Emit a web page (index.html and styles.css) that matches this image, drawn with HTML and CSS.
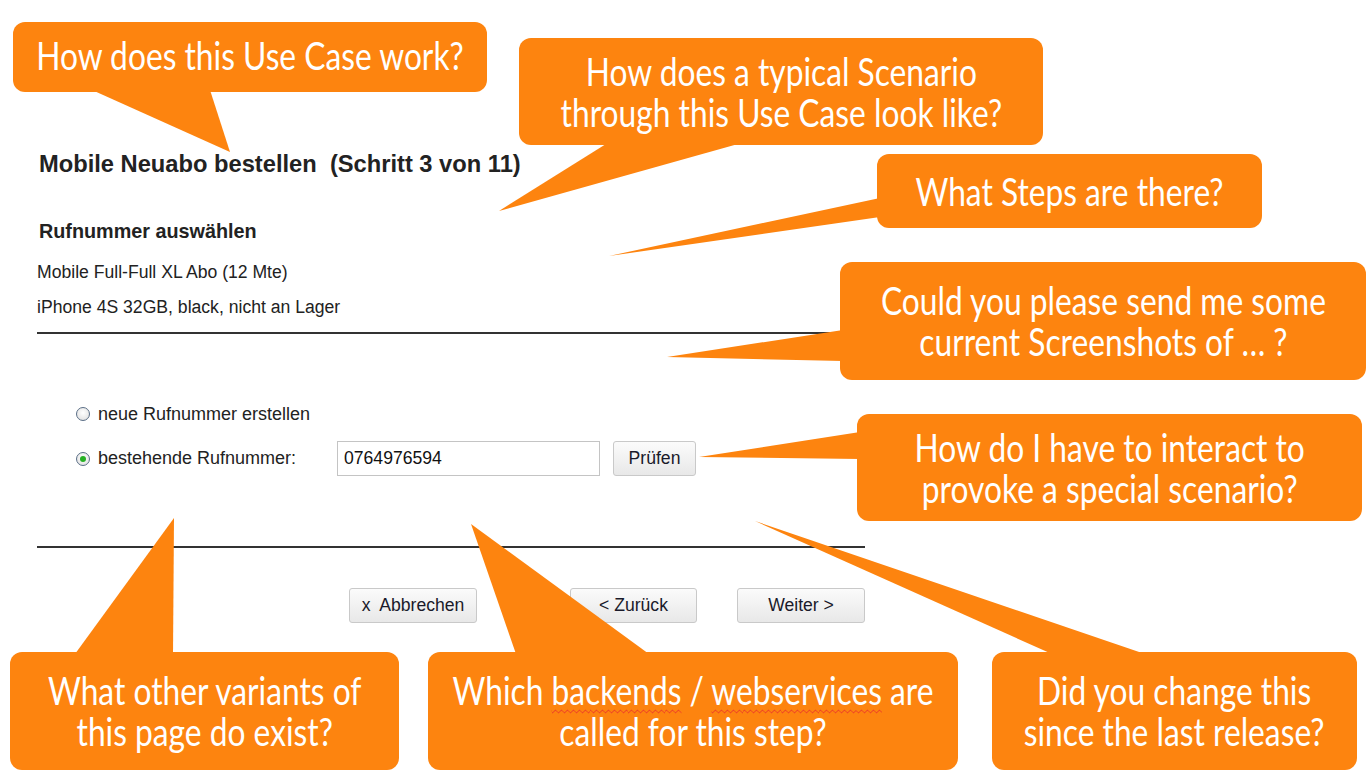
FILE: index.html
```html
<!DOCTYPE html>
<html lang="de">
<head>
  <meta charset="UTF-8">
  <meta name="viewport" content="width=device-width, initial-scale=1.0">
  <link rel="stylesheet" href="styles.css">
</head>
<body>
  <div class="slide">
    <div class="wizard">
      <h1 class="wizard-title">Mobile Neuabo bestellen&nbsp; (Schritt 3 von 11)</h1>
      <h2 class="step-title">Rufnummer auswählen</h2>
      <p class="info">Mobile Full-Full XL Abo (12 Mte)</p>
      <p class="info info-second">iPhone 4S 32GB, black, nicht an Lager</p>
      <div class="rule"></div>

      <div class="options">
        <label class="option">
          <input type="radio" name="nummer">
          <span>neue Rufnummer erstellen</span>
        </label>
        <div class="option option-input">
          <label class="option-label">
            <input type="radio" name="nummer" checked>
            <span>bestehende Rufnummer:</span>
          </label>
          <input type="text" class="number-field" value="0764976594">
          <button class="btn btn-check">Prüfen</button>
        </div>
      </div>

      <div class="rule rule-bottom"></div>

      <div class="nav-buttons">
        <button class="btn btn-cancel">x&nbsp; Abbrechen</button>
        <button class="btn btn-back">&lt; Zurück</button>
        <button class="btn btn-next">Weiter &gt;</button>
      </div>
    </div>

    <!-- callout tails -->
    <svg class="tails" viewBox="0 0 1372 784" width="1372" height="784">
      <polygon points="92,90 210,90 230,152" />
      <polygon points="606,144 738,144 499,211" />
      <polygon points="880,198 880,217 609,256" />
      <polygon points="843,330 843,361 667,357" />
      <polygon points="860,432 860,459 699,457" />
      <polygon points="75,654 173,654 174,518" />
      <polygon points="516,654 649,654 471,524" />
      <polygon points="1052,654 1145,654 755,521" />
    </svg>

    <div class="bubble bubble-work"><span class="bubble-text">How does this Use Case work?</span></div>
    <div class="bubble bubble-scenario"><span class="bubble-text">How does a typical Scenario<br>through this Use Case look like?</span></div>
    <div class="bubble bubble-steps"><span class="bubble-text">What Steps are there?</span></div>
    <div class="bubble bubble-shots"><span class="bubble-text">Could you please send me some<br>current Screenshots of … ?</span></div>
    <div class="bubble bubble-interact"><span class="bubble-text">How do I have to interact to<br>provoke a special scenario?</span></div>
    <div class="bubble bubble-variants"><span class="bubble-text">What other variants of<br>this page do exist?</span></div>
    <div class="bubble bubble-backends"><span class="bubble-text">Which <span class="typo">backends</span> / <span class="typo">webservices</span> are<br>called for this step?</span></div>
    <div class="bubble bubble-release"><span class="bubble-text">Did you change this<br>since the last release?</span></div>
  </div>
</body>
</html>
```

FILE: styles.css
```css
body {
  margin: 0;
  background: #ffffff;
  font-family: 'Liberation Sans', Arial, sans-serif;
  color: #222222;
}

.slide {
  width: 1372px;
  height: 784px;
  position: relative;
  overflow: hidden;
}

.wizard {
  width: 828px;
  padding-left: 37px;
}

.wizard-title {
  margin: 151px 0 0 2px;
  font-size: 23.7px;
  line-height: 26px;
  font-weight: 700;
  white-space: pre;
}

.step-title {
  margin: 43px 0 0 2px;
  font-size: 19.8px;
  line-height: 22px;
  font-weight: 700;
}

.info {
  margin: 20px 0 0;
  font-size: 17.6px;
  line-height: 20px;
}

.info-second {
  margin-top: 15px;
}

.rule {
  margin-top: 15px;
  height: 2px;
  background: #333333;
}

.options {
  margin-top: 68px;
  padding-left: 39px;
  display: flex;
  flex-direction: column;
  gap: 15px;
  font-size: 18px;
}

.option,
.option-label {
  display: flex;
  align-items: center;
  gap: 8px;
  height: 24px;
}

.option-input {
  height: 35px;
  gap: 0;
}

.option-label {
  width: 261px;
}

.options input[type="radio"] {
  appearance: none;
  margin: 0;
  width: 14px;
  height: 14px;
  border-radius: 50%;
  border: 1px solid #5a6e86;
  background: radial-gradient(circle at 50% 40%, #ffffff, #dcdcdc);
  display: grid;
  place-content: center;
}

.options input[type="radio"]:checked::before {
  content: "";
  width: 6px;
  height: 6px;
  border-radius: 50%;
  background: #27b024;
}

.number-field {
  width: 263px;
  height: 35px;
  box-sizing: border-box;
  border: 1px solid #c4c4c4;
  padding: 0 6px;
  font-family: 'Liberation Sans', Arial, sans-serif;
  font-size: 17.6px;
  color: #111111;
}

.btn {
  height: 35px;
  box-sizing: border-box;
  border: 1px solid #c9c9c9;
  border-radius: 3px;
  background: linear-gradient(#fbfbfb, #e8e8e8);
  font-family: 'Liberation Sans', Arial, sans-serif;
  font-size: 17.6px;
  color: #1a1a2a;
  padding: 0;
}

.btn-check {
  width: 83px;
  margin-left: 13px;
}

.rule-bottom {
  margin-top: 70px;
}

.nav-buttons {
  margin-top: 40px;
  display: flex;
}

.btn-cancel {
  width: 128px;
  margin-left: 312px;
}

.btn-back {
  width: 127px;
  margin-left: 93px;
}

.btn-next {
  width: 128px;
  margin-left: 40px;
}

.tails {
  position: absolute;
  left: 0;
  top: 0;
  fill: #fd840f;
}

.bubble {
  position: absolute;
  box-sizing: border-box;
  display: flex;
  align-items: center;
  justify-content: center;
  background: #fd840f;
  border-radius: 12px;
  color: #ffffff;
  font-family: Lato, 'Open Sans', sans-serif;
  font-size: 38px;
  line-height: 41px;
}

.bubble-text {
  display: block;
  text-align: center;
  white-space: nowrap;
  transform: scaleX(0.835);
}

.bubble-work {
  left: 13px;
  top: 22px;
  width: 474px;
  height: 70px;
  padding-bottom: 3px;
}

.bubble-scenario {
  left: 519px;
  top: 38px;
  width: 524px;
  height: 107px;
}

.bubble-steps {
  left: 877px;
  top: 154px;
  width: 385px;
  height: 74px;
}

.bubble-shots {
  left: 840px;
  top: 262px;
  width: 526px;
  height: 118px;
}

.bubble-interact {
  left: 857px;
  top: 414px;
  width: 505px;
  height: 107px;
}

.bubble-variants {
  left: 10px;
  top: 652px;
  width: 389px;
  height: 118px;
}

.bubble-backends {
  left: 428px;
  top: 652px;
  width: 530px;
  height: 118px;
}

.bubble-release {
  left: 992px;
  top: 652px;
  width: 365px;
  height: 118px;
}

.typo {
  text-decoration: underline wavy #e8302a;
  text-decoration-thickness: 1px;
  text-underline-offset: 4px;
}
```
